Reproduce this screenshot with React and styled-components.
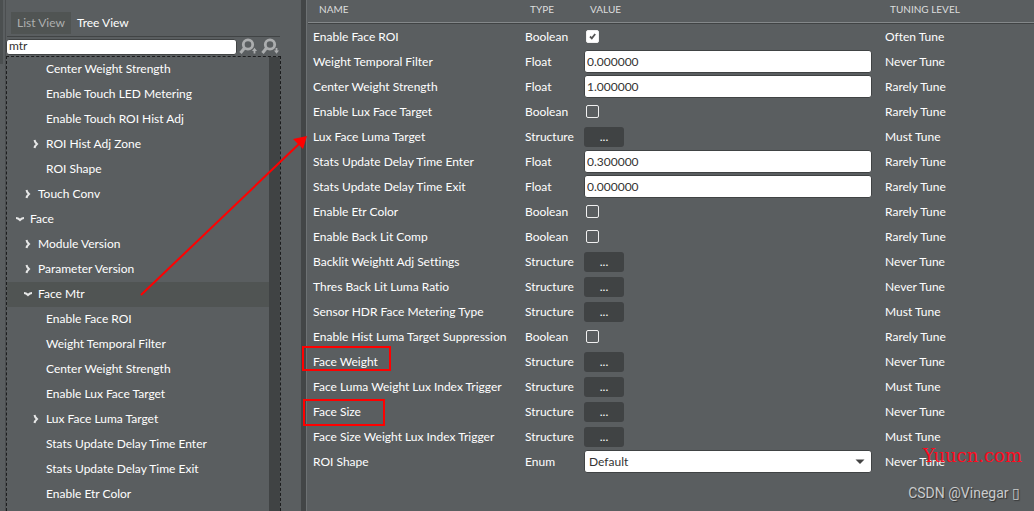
import React from "react";
import styled, { createGlobalStyle } from "styled-components";

const GlobalStyle = createGlobalStyle`
  * { box-sizing: border-box; }
  html, body { margin: 0; background: #5a5e60; }
  body { overflow: hidden; }
  body, button, input, select {
    font-family: Lato, "Open Sans", sans-serif;
    font-size: 12px;
    font-variant-ligatures: none;
    color: #fff;
  }
`;

const Page = styled.div`
  position: relative;
  display: flex;
  height: 100vh;
  overflow: hidden;
  background: #5a5e60;
`;

const Gutter = styled.div`
  flex: none;
  width: 6px;
  border-right: 1px solid #4b4e50;
`;

const GutterTab = styled.div`
  width: 3px;
  height: 64px;
  background: #4b4f50;
`;

const Sidebar = styled.aside`
  flex: none;
  display: flex;
  flex-direction: column;
  width: 295px;
  padding: 12px 20px 0 0;
`;

const Tabs = styled.div`
  display: flex;
  height: 25px;
  margin: 0 1px;
  padding-left: 4px;
  border-bottom: 1px solid #414445;
`;

const Tab = styled.button`
  height: 22px;
  padding: 0 6px;
  border: 0;
  line-height: 20px;
  background: ${(p) => (p.$muted ? "#505453" : "transparent")};
  color: ${(p) => (p.$muted ? "#adafaf" : "#fff")};
`;

const SearchRow = styled.div`
  display: flex;
  align-items: center;
  gap: 2px;
  height: 19px;
`;

const SearchInput = styled.input`
  flex: 1;
  min-width: 0;
  height: 16px;
  padding: 0 2px 2px;
  border: 1px solid #414445;
  border-radius: 3px;
  background: #fff;
  color: #333;
  line-height: 14px;
`;

const IconButton = styled.button`
  display: flex;
  width: 20px;
  height: 18px;
  padding: 0;
  border: 0;
  background: none;
`;

const TreeBox = styled.div`
  flex: 1;
  display: flex;
  min-height: 0;
  border: 1px dashed #1c1d1e;
  border-bottom: 0;
`;

const Tree = styled.ul`
  flex: 1;
  margin: 0;
  padding: 0;
  list-style: none;
`;

const TreeItem = styled.li`
  display: flex;
  align-items: center;
  gap: 5px;
  height: 25px;
  padding: 0 0 2px ${(p) => 8 + p.$level * 8}px;
  background: ${(p) => (p.$selected ? "#505453" : "transparent")};
  white-space: nowrap;
`;

const Toggle = styled.span`
  display: flex;
  width: 10px;
`;

const ScrollTrack = styled.div`
  width: 11px;
  background: #404344;
`;

const Splitter = styled.div`
  flex: none;
  width: 6px;
  margin-right: 1px;
  border-right: 1px solid #6d7173;
  background: #434647;
`;

const Main = styled.main`
  flex: 1;
  min-width: 0;
`;

const Table = styled.table`
  width: 100%;
  table-layout: fixed;
  border-collapse: separate;
  border-spacing: 0;
`;

const Col = styled.col`
  width: ${(p) => p.$w};
`;

const HeadCell = styled.th`
  height: 24px;
  padding: 0 0 5px ${(p) => p.$pad}px;
  border-bottom: 1px solid #404344;
  box-shadow: inset 0 -1px #84888a;
  text-align: left;
  font-size: 10px;
  line-height: 12px;
  font-weight: 400;
  white-space: nowrap;
  color: #dcdddd;
`;

const Cell = styled.td`
  height: 25px;
  padding: 0 0 0 5px;
  line-height: 17px;
  white-space: nowrap;
`;

const ValueCell = styled(Cell)`
  padding: 1px 8px 1px 4px;
`;

const NumberInput = styled.input`
  display: block;
  width: 100%;
  height: 23px;
  padding: 0 2px;
  border: 1px solid #404344;
  border-radius: 3px;
  background: #fff;
  color: #333;
`;

const Check = styled.input`
  appearance: none;
  display: block;
  width: 13px;
  height: 13px;
  margin: 0 0 0 2px;
  border: 1px solid #f0f0f0;
  border-radius: 2px;
  &:checked {
    background: #fff url("data:image/svg+xml,%3Csvg xmlns='http://www.w3.org/2000/svg' viewBox='0 0 11 11'%3E%3Cpath d='M3 5.5 4.8 7.3 8.2 3' fill='none' stroke='%23555' stroke-width='1.8'/%3E%3C/svg%3E") center / 11px no-repeat;
  }
`;

const MoreButton = styled.button`
  display: block;
  width: 40px;
  height: 20px;
  padding: 0;
  border: 0;
  border-radius: 3px;
  background: #404344;
  line-height: 18px;
`;

const SelectWrap = styled.div`
  position: relative;
`;

const Select = styled.select`
  appearance: none;
  display: block;
  width: 100%;
  height: 23px;
  padding: 0 4px;
  border: 1px solid #404344;
  border-radius: 3px;
  background: #fff;
  color: #333;
`;

const SelectArrow = styled.svg`
  position: absolute;
  top: 9px;
  right: 7px;
  pointer-events: none;
`;

const Annotations = styled.svg`
  position: absolute;
  top: 0;
  left: 0;
  pointer-events: none;
`;

const Watermarks = styled.div`
  position: absolute;
  right: 12px;
  bottom: 9px;
  display: flex;
  flex-direction: column;
  align-items: flex-end;
  pointer-events: none;
`;

const SiteMark = styled.span`
  font: 400 18px/24px "DejaVu Serif", serif;
  color: #ff0a1e;
`;

const AuthorMark = styled.span`
  padding: 16px 2px 0 0;
  font: 400 14px/18px Roboto, sans-serif;
  color: #c9cbcc;
  text-shadow: 1px 1px 1px #333;
`;

const tree = [
  ["Center Weight Strength", 2],
  ["Enable Touch LED Metering", 2],
  ["Enable Touch ROI Hist Adj", 2],
  ["ROI Hist Adj Zone", 2, "closed"],
  ["ROI Shape", 2],
  ["Touch Conv", 1, "closed"],
  ["Face", 0, "open"],
  ["Module Version", 1, "closed"],
  ["Parameter Version", 1, "closed"],
  ["Face Mtr", 1, "open"],
  ["Enable Face ROI", 2],
  ["Weight Temporal Filter", 2],
  ["Center Weight Strength", 2],
  ["Enable Lux Face Target", 2],
  ["Lux Face Luma Target", 2, "closed"],
  ["Stats Update Delay Time Enter", 2],
  ["Stats Update Delay Time Exit", 2],
  ["Enable Etr Color", 2],
];

const rows = [
  ["Enable Face ROI", "Boolean", true, "Often"],
  ["Weight Temporal Filter", "Float", "0.000000", "Never"],
  ["Center Weight Strength", "Float", "1.000000", "Rarely"],
  ["Enable Lux Face Target", "Boolean", false, "Rarely"],
  ["Lux Face Luma Target", "Structure", null, "Must"],
  ["Stats Update Delay Time Enter", "Float", "0.300000", "Rarely"],
  ["Stats Update Delay Time Exit", "Float", "0.000000", "Rarely"],
  ["Enable Etr Color", "Boolean", false, "Rarely"],
  ["Enable Back Lit Comp", "Boolean", false, "Rarely"],
  ["Backlit Weightt Adj Settings", "Structure", null, "Never"],
  ["Thres Back Lit Luma Ratio", "Structure", null, "Never"],
  ["Sensor HDR Face Metering Type", "Structure", null, "Must"],
  ["Enable Hist Luma Target Suppression", "Boolean", false, "Rarely"],
  ["Face Weight", "Structure", null, "Never"],
  ["Face Luma Weight Lux Index Trigger", "Structure", null, "Must"],
  ["Face Size", "Structure", null, "Never"],
  ["Face Size Weight Lux Index Trigger", "Structure", null, "Must"],
  ["ROI Shape", "Enum", "Default", "Never"],
];

function Chevron({ open }) {
  return (
    <svg width="10" height="10" viewBox="0 0 10 10" fill="none" stroke="#e6e7e7" strokeWidth="2">
      <path d={open ? "M1 4Q3 4 5 6Q7 4 9 4" : "M3.5 1Q3.8 3 6 5Q3.8 7 3.5 9"} />
    </svg>
  );
}

function FindIcon({ up }) {
  return (
    <svg width="20" height="18" viewBox="0 0 20 18" fill="none" stroke="#abadae">
      <circle cx="9" cy="6.5" r="4.7" strokeWidth="2.8" />
      <path d="M5.5 10 1.5 15" strokeWidth="3" />
      <path d={up ? "M15.5 15.5V12" : "M15.5 10V13"} strokeWidth="1.8" />
      <path
        d={up ? "M13 13 15.5 9.8 18 13Z" : "M13 12.5 15.5 15.8 18 12.5Z"}
        fill="#abadae"
        stroke="none"
      />
    </svg>
  );
}

function Value({ name, type, value }) {
  if (type === "Boolean") return <Check type="checkbox" aria-label={name} defaultChecked={value} />;
  if (type === "Float") return <NumberInput aria-label={name} defaultValue={value} />;
  if (type === "Enum")
    return (
      <SelectWrap>
        <Select aria-label={name} defaultValue={value}>
          <option>{value}</option>
        </Select>
        <SelectArrow width="10" height="6" viewBox="0 0 10 6">
          <path d="M0.5 0.5h9L5 5Z" fill="#444" />
        </SelectArrow>
      </SelectWrap>
    );
  return <MoreButton aria-label={`Edit ${name}`}>...</MoreButton>;
}

export default function App() {
  return (
    <Page>
      <GlobalStyle />
      <Gutter>
        <GutterTab />
      </Gutter>
      <Sidebar>
        <Tabs>
          <Tab $muted>List View</Tab>
          <Tab>Tree View</Tab>
        </Tabs>
        <SearchRow>
          <SearchInput aria-label="Search parameters" defaultValue="mtr" />
          <IconButton aria-label="Find previous">
            <FindIcon up />
          </IconButton>
          <IconButton aria-label="Find next">
            <FindIcon />
          </IconButton>
        </SearchRow>
        <TreeBox>
          <Tree>
            {tree.map(([label, level, state], i) => (
              <TreeItem key={i} $level={level} $selected={label === "Face Mtr"}>
                <Toggle>{state && <Chevron open={state === "open"} />}</Toggle>
                <span>{label}</span>
              </TreeItem>
            ))}
          </Tree>
          <ScrollTrack />
        </TreeBox>
      </Sidebar>
      <Splitter />
      <Main>
        <Table>
          <colgroup>
            <Col $w="212px" />
            <Col $w="60px" />
            <Col $w="300px" />
            <Col $w="auto" />
          </colgroup>
          <thead>
            <tr>
              <HeadCell $pad={11}>NAME</HeadCell>
              <HeadCell $pad={10}>TYPE</HeadCell>
              <HeadCell $pad={10}>VALUE</HeadCell>
              <HeadCell $pad={10}>TUNING LEVEL</HeadCell>
            </tr>
          </thead>
          <tbody>
            {rows.map(([name, type, value, level], i) => (
              <tr key={i}>
                <Cell>{name}</Cell>
                <Cell>{type}</Cell>
                <ValueCell>
                  <Value name={name} type={type} value={value} />
                </ValueCell>
                <Cell>{level} Tune</Cell>
              </tr>
            ))}
          </tbody>
        </Table>
      </Main>
      <Annotations width="400" height="440" viewBox="0 0 400 440" fill="none" stroke="#f00" strokeWidth="2">
        <path d="M141 295 300 143" />
        <path d="M307 136 293 139 303 149Z" fill="#f00" stroke="none" />
        <rect x="303" y="347" width="87" height="23" />
        <rect x="304" y="400" width="80" height="25" />
      </Annotations>
      <Watermarks>
        <SiteMark>Yuucn.com</SiteMark>
        <AuthorMark>CSDN @Vinegar ▯</AuthorMark>
      </Watermarks>
    </Page>
  );
}
